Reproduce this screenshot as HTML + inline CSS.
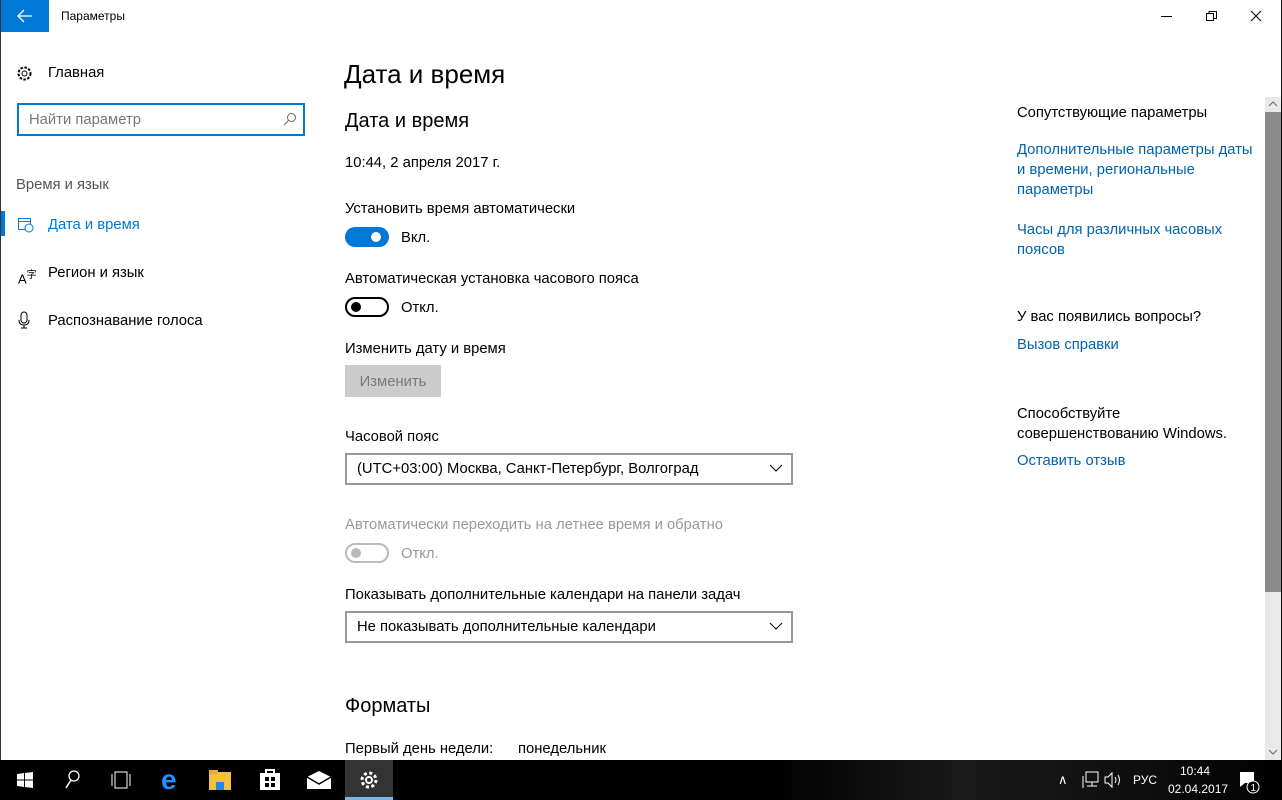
<!DOCTYPE html>
<html><head><meta charset="utf-8"><style>
*{margin:0;padding:0;box-sizing:border-box}
body{width:1282px;height:800px;overflow:hidden;background:#fff;font-family:"Liberation Sans",sans-serif;font-size:14.8px;color:#000;position:relative}
.a{position:absolute;white-space:nowrap}
.blue{color:#0063b1}
.tog{position:absolute;width:44px;height:20px;border-radius:10px}
.dd{position:absolute;border:2px solid #999;width:448px;height:32px;padding:6px 0 0 10px}
.dd svg{position:absolute;right:8px;top:9px}
.tb{position:absolute;top:760px;height:40px}
</style></head><body>
<div class="a" style="left:0;top:0;width:1px;height:760px;background:#333"></div>
<div class="a" style="left:1281px;top:0;width:1px;height:760px;background:#111"></div>
<div class="a" style="left:1px;top:0;width:48px;height:32px;background:#0078d7"></div>
<svg class="a" style="left:17px;top:9px" width="16" height="14"><path d="M1 7H15M7 1L1 7L7 13" stroke="#fff" stroke-width="1.3" fill="none"/></svg>
<div class="a" style="left:61px;top:9px;font-size:12px">Параметры</div>
<div class="a" style="left:1161px;top:16px;width:11px;height:1px;background:#000"></div>
<svg class="a" style="left:1206px;top:10px" width="12" height="12"><path d="M0.5 3.5H7.5V10.5H0.5ZM3 3.5V1.5H10.5V8.5H7.5" stroke="#000" fill="none"/></svg>
<svg class="a" style="left:1250px;top:10px" width="12" height="12"><path d="M1 1L11 11M11 1L1 11" stroke="#000"/></svg>

<svg class="a" style="left:16px;top:65px" width="17" height="17" viewBox="0 0 17 17"><circle cx="8.5" cy="8.5" r="2.5" fill="none" stroke="#000"/><circle cx="8.5" cy="8.5" r="6" fill="none" stroke="#000" stroke-dasharray="2.5 1.5" stroke-width="2"/></svg>
<div class="a" style="left:48px;top:65px">Главная</div>
<div class="a" style="left:17px;top:103px;width:288px;height:33px;border:2px solid #0078d7"></div>
<div class="a" style="left:29px;top:112px;color:#777">Найти параметр</div>
<svg class="a" style="left:283px;top:112px" width="14" height="14"><circle cx="8.5" cy="5.5" r="4" fill="none" stroke="#666"/><path d="M5.5 8.5L1 13" stroke="#666"/></svg>
<div class="a" style="left:16px;top:177px;color:#555">Время и язык</div>
<div class="a" style="left:1px;top:211px;width:4px;height:25px;background:#0078d7"></div>
<svg class="a" style="left:17px;top:216px" width="17" height="17"><rect x="1.5" y="2.5" width="12" height="11" fill="none" stroke="#0078d7"/><path d="M1.5 5.5H13.5" stroke="#0078d7"/><circle cx="12" cy="12" r="4" fill="#fff" stroke="#0078d7"/></svg>
<div class="a blue" style="left:48px;top:217px;color:#0078d7">Дата и время</div>
<div class="a" style="left:18px;top:266px;font-size:13px">A<sup style="font-size:10px">字</sup></div>
<div class="a" style="left:48px;top:265px">Регион и язык</div>
<svg class="a" style="left:18px;top:311px" width="12" height="18"><rect x="3" y="1" width="6" height="11" rx="3" fill="none" stroke="#000"/><path d="M1 9Q1 14 6 14Q11 14 11 9M6 14V17M3 17H9" stroke="#000" fill="none"/></svg>
<div class="a" style="left:48px;top:313px">Распознавание голоса</div>

<div class="a" style="left:344px;top:59px;font-size:26px">Дата и время</div>
<div class="a" style="left:345px;top:110px;font-size:20px">Дата и время</div>
<div class="a" style="left:345px;top:155px">10:44, 2 апреля 2017 г.</div>
<div class="a" style="left:345px;top:201px">Установить время автоматически</div>
<div class="tog" style="left:345px;top:227px;background:#0078d7"></div>
<div class="a" style="left:371px;top:232px;width:10px;height:10px;border-radius:5px;background:#fff"></div>
<div class="a" style="left:401px;top:230px">Вкл.</div>
<div class="a" style="left:345px;top:271px">Автоматическая установка часового пояса</div>
<div class="tog" style="left:345px;top:297px;border:2px solid #000"></div>
<div class="a" style="left:351px;top:302px;width:10px;height:10px;border-radius:5px;background:#000"></div>
<div class="a" style="left:401px;top:300px">Откл.</div>
<div class="a" style="left:345px;top:341px">Изменить дату и время</div>
<div class="a" style="left:345px;top:365px;width:96px;height:32px;background:#ccc;color:#7a7a7a;text-align:center;padding-top:9px">Изменить</div>
<div class="a" style="left:345px;top:429px">Часовой пояс</div>
<div class="dd" style="left:345px;top:453px">(UTC+03:00) Москва, Санкт-Петербург, Волгоград<svg width="14" height="8"><path d="M1 1L7 7L13 1" stroke="#000" fill="none"/></svg></div>
<div class="a" style="left:345px;top:517px;color:#999">Автоматически переходить на летнее время и обратно</div>
<div class="tog" style="left:345px;top:543px;border:2px solid #bbb"></div>
<div class="a" style="left:351px;top:548px;width:10px;height:10px;border-radius:5px;background:#bbb"></div>
<div class="a" style="left:401px;top:546px;color:#999">Откл.</div>
<div class="a" style="left:345px;top:587px">Показывать дополнительные календари на панели задач</div>
<div class="dd" style="left:345px;top:611px">Не показывать дополнительные календари<svg width="14" height="8"><path d="M1 1L7 7L13 1" stroke="#000" fill="none"/></svg></div>
<div class="a" style="left:345px;top:695px;font-size:20px">Форматы</div>
<div class="a" style="left:345px;top:741px">Первый день недели:</div>
<div class="a" style="left:518px;top:741px">понедельник</div>

<div class="a" style="left:1017px;top:105px">Сопутствующие параметры</div>
<div class="a blue" style="left:1017px;top:140px;line-height:20px">Дополнительные параметры даты<br>и времени, региональные<br>параметры</div>
<div class="a blue" style="left:1017px;top:220px;line-height:20px">Часы для различных часовых<br>поясов</div>
<div class="a" style="left:1017px;top:309px">У вас появились вопросы?</div>
<div class="a blue" style="left:1017px;top:337px">Вызов справки</div>
<div class="a" style="left:1017px;top:404px;line-height:20px">Способствуйте<br>совершенствованию Windows.</div>
<div class="a blue" style="left:1017px;top:453px">Оставить отзыв</div>

<div class="a" style="left:1265px;top:97px;width:16px;height:663px;background:#e9e9e9"></div>
<div class="a" style="left:1265px;top:112px;width:16px;height:480px;background:#898989"></div>
<svg class="a" style="left:1268px;top:101px" width="10" height="6"><path d="M1 5L5 1L9 5" stroke="#666" fill="none"/></svg>
<svg class="a" style="left:1268px;top:749px" width="10" height="6"><path d="M1 1L5 5L9 1" stroke="#666" fill="none"/></svg>

<div class="tb" style="left:0;width:1282px;background:linear-gradient(90deg,#000 60%,#1a1a1a 75%,#0d0d0d 90%,#000)"></div>
<svg class="tb" style="left:17px;top:772px;height:16px" width="16" height="16"><path d="M0 2L7 1V7.5H0ZM8 1L16 0V7.5H8ZM0 8.5H7V15L0 14ZM8 8.5H16V16L8 15Z" fill="#fff"/></svg>
<svg class="tb" style="left:64px;top:770px;height:20px" width="16" height="20"><circle cx="10" cy="6" r="5" fill="none" stroke="#fff" stroke-width="1.3"/><path d="M7 10L2 18" stroke="#fff" stroke-width="1.5"/></svg>
<svg class="tb" style="left:110px;top:771px;height:18px" width="22" height="18"><rect x="5" y="1" width="12" height="16" fill="none" stroke="#fff"/><path d="M2 3V15M20 3V15" stroke="#fff"/></svg>
<div class="a" style="left:161px;top:764px;color:#1e90ff;font-size:28px;font-weight:bold">e</div>
<svg class="tb" style="left:208px;top:769px;height:22px" width="24" height="22"><rect x="1" y="3" width="22" height="18" fill="#f3c040"/><rect x="1" y="1" width="9" height="4" fill="#e8b030"/><rect x="8" y="13" width="8" height="8" fill="#1e88e5"/></svg>
<svg class="tb" style="left:259px;top:767px;height:24px" width="22" height="24"><path d="M7 6V3H15V6" stroke="#fff" fill="none" stroke-width="2"/><rect x="1" y="6" width="20" height="17" fill="#fff"/><rect x="6" y="10" width="4" height="4"/><rect x="12" y="10" width="4" height="4"/><rect x="6" y="16" width="4" height="4"/><rect x="12" y="16" width="4" height="4"/></svg>
<svg class="tb" style="left:306px;top:770px;height:20px" width="26" height="20"><path d="M1 7L13 1L25 7V19H1Z" fill="#fff"/><path d="M1 7L13 14L25 7" stroke="#000" stroke-width="1.5" fill="none"/></svg>
<div class="tb" style="left:345px;width:48px;background:#333"></div>
<div class="tb" style="left:345px;top:797px;height:3px;width:48px;background:#76b9ed"></div>
<svg class="tb" style="left:359px;top:770px;height:20px" width="20" height="20" viewBox="0 0 20 20"><circle cx="10" cy="10" r="3" fill="none" stroke="#fff" stroke-width="2"/><circle cx="10" cy="10" r="7" fill="none" stroke="#fff" stroke-width="3" stroke-dasharray="3 2.5"/></svg>
<div class="a" style="left:1058px;top:772px;color:#fff;font-size:13px">∧</div>
<svg class="tb" style="left:1082px;top:771px;height:18px" width="18" height="18"><rect x="4" y="1" width="12" height="10" fill="none" stroke="#fff"/><path d="M10 11V15M5 15H15M1 5V17" stroke="#fff"/></svg>
<svg class="tb" style="left:1104px;top:771px;height:18px" width="20" height="18"><path d="M1 6H4L8 2V16L4 12H1Z" fill="none" stroke="#fff"/><path d="M11 6Q13 9 11 12M14 4Q17 9 14 14" stroke="#fff" fill="none"/></svg>
<div class="a" style="left:1133px;top:773px;color:#fff;font-size:12px">РУС</div>
<div class="a" style="left:1180px;top:764px;color:#fff;font-size:12px">10:44</div>
<div class="a" style="left:1168px;top:782px;color:#fff;font-size:12px">02.04.2017</div>
<svg class="tb" style="left:1238px;top:770px;height:24px" width="24" height="24"><path d="M2 2H16V13H7L2 17Z" fill="#fff"/><circle cx="15" cy="17" r="6" fill="#000" stroke="#fff"/><text x="12.5" y="21" fill="#fff" font-size="10" font-family="Liberation Sans">1</text></svg>
</body></html>
